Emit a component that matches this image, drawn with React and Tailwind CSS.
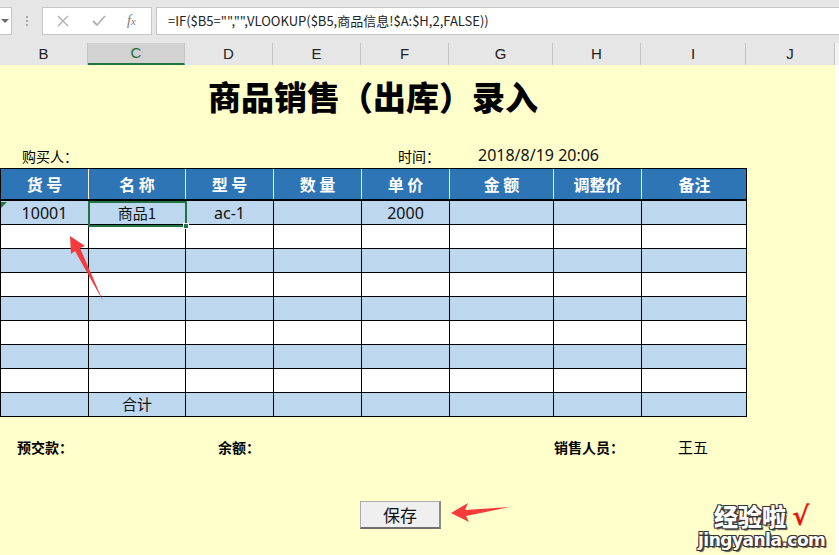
import React from 'react'

const gridCols = 'grid grid-cols-[88px_97px_88px_88px_88px_104px_88px_105px]'

const headers = ['货 号', '名 称', '型 号', '数 量', '单 价', '金 额', '调整价', '备注']

const rows = [
  ['10001', '商品1', 'ac-1', '', '2000', '', '', ''],
  ['', '', '', '', '', '', '', ''],
  ['', '', '', '', '', '', '', ''],
  ['', '', '', '', '', '', '', ''],
  ['', '', '', '', '', '', '', ''],
  ['', '', '', '', '', '', '', ''],
  ['', '', '', '', '', '', '', ''],
  ['', '', '', '', '', '', '', ''],
  ['', '合计', '', '', '', '', '', ''],
]

const letters = [
  ['B', 88], ['C', 97], ['D', 88], ['E', 88], ['F', 88], ['G', 104], ['H', 88], ['I', 105], ['J', 89],
]

const cjk = "font-['Noto_Sans_CJK_SC','Noto_Sans',sans-serif]"

function Toolbar() {
  return (
    <div className="h-[43px] bg-[#e6e6e6] flex items-start pt-[7px] relative">
      {/* name box tail */}
      <div className="w-[12px] h-[28px] bg-white border border-[#c6c6c6] border-l-0 flex items-center justify-end pr-[2px]">
        <div className="w-0 h-0 border-l-[4px] border-r-[4px] border-t-[4px] border-l-transparent border-r-transparent border-t-[#6b6b6b]" />
      </div>
      <div className="w-[30px] h-[28px] flex flex-col items-center justify-center gap-[2px]">
        <div className="w-[2px] h-[2px] bg-[#a8a8a8]" />
        <div className="w-[2px] h-[2px] bg-[#a8a8a8]" />
        <div className="w-[2px] h-[2px] bg-[#a8a8a8]" />
      </div>
      <div className="w-[110px] h-[28px] bg-white border border-[#c6c6c6] flex items-center text-[#a6a6a6]">
        <svg width="14" height="14" viewBox="0 0 14 14" className="ml-[13px]">
          <path d="M2 2 L12 12 M12 2 L2 12" stroke="#b0b0b0" strokeWidth="1.4" fill="none" />
        </svg>
        <svg width="16" height="14" viewBox="0 0 16 14" className="ml-[21px]">
          <path d="M2 7 L6 11 L14 2" stroke="#b0b0b0" strokeWidth="1.8" fill="none" />
        </svg>
        <span className="ml-[20px] font-['Liberation_Serif',serif] italic text-[14px] text-[#7a7a7a] leading-none">
          f<span className="text-[11px]">x</span>
        </span>
      </div>
      <div className="ml-[4px] flex-1 h-[28px] bg-white border border-[#c6c6c6] border-r-0 flex items-center pl-[11px]">
        <span className={`${cjk} text-[13px] text-[#222]`}>
          =IF($B5="","",VLOOKUP($B5,商品信息!$A:$H,2,FALSE))
        </span>
      </div>
    </div>
  )
}

function ColumnHeaders() {
  return (
    <div className="h-[22px] bg-[#e6e6e6] flex">
      {letters.map(([l, w]) => (
        <div
          key={l}
          style={{ width: w }}
          className={`h-full flex items-center justify-center border-r border-[#c4c4c4] font-['Liberation_Sans',sans-serif] text-[15px] ${
            l === 'C'
              ? 'bg-[#d2d2d2] text-[#1e6b40] border-b-2 border-b-[#217346]'
              : 'text-[#222]'
          }`}
        >
          {l}
        </div>
      ))}
      <div className="flex-1 bg-[#f3f3f3]" />
    </div>
  )
}

function DataTable() {
  return (
    <div className="w-[747px] border-t border-l border-r border-black relative">
      <div className={`${gridCols} h-[32px] bg-[#2e75b6] border-b-2 border-black`}>
        {headers.map((h, i) => (
          <div
            key={i}
            className={`flex items-center justify-center text-white font-bold text-[16px] ${cjk} ${
              i < headers.length - 1 ? 'border-r border-[#f5edc8]' : ''
            }`}
          >
            {h}
          </div>
        ))}
      </div>
      {rows.map((r, ri) => (
        <div
          key={ri}
          className={`${gridCols} h-[24px] border-b border-black ${ri % 2 === 0 ? 'bg-[#bdd7ee]' : 'bg-white'}`}
        >
          {r.map((c, ci) => (
            <div
              key={ci}
              className={`flex items-center justify-center text-[#111] ${
                ci < r.length - 1 ? 'border-r border-black' : ''
              } ${/[0-9a-z]/.test(c) && !/商品/.test(c) ? "font-['Noto_Sans',sans-serif] text-[16px]" : `${cjk} text-[15px]`}`}
            >
              {c}
            </div>
          ))}
        </div>
      ))}
      {/* error indicator */}
      <div className="absolute left-0 top-[33px] w-0 h-0 border-t-[6px] border-r-[6px] border-t-[#1e7b3c] border-r-transparent" />
      {/* selected cell */}
      <div className="absolute left-[87px] top-[32px] w-[99px] h-[26px] border-2 border-[#217346]" />
      <div className="absolute left-[182px] top-[54px] w-[6px] h-[6px] bg-[#217346] border border-white" />
    </div>
  )
}

export default function App() {
  return (
    <div className="w-[839px] h-[555px] overflow-hidden bg-[#ffffcc] relative">
      <Toolbar />
      <ColumnHeaders />

      <div className="w-[746px] h-[63px] flex items-center justify-center">
        <h1 className={`${cjk} font-black text-[33px] text-black leading-none`}>商品销售（出库）录入</h1>
      </div>

      <div className={`${gridCols} h-[40px] items-end pb-[1px]`}>
        <div className={`${cjk} text-[14px] pl-[22px] whitespace-nowrap`}>购买人：</div>
        <div />
        <div />
        <div />
        <div className={`${cjk} text-[14px] pl-[37px] whitespace-nowrap`}>时间：</div>
        <div className="font-['Noto_Sans',sans-serif] text-[16px] pl-[29px] whitespace-nowrap text-[#111]">
          2018/8/19 20:06
        </div>
      </div>

      <DataTable />

      <div className={`${cjk} mt-[20px] pl-[17px] flex text-[14px] font-bold h-[20px] items-center`}>
        <div className="w-[201px]">预交款：</div>
        <div className="w-[336px]">余额：</div>
        <div className="w-[124px]">销售人员：</div>
        <div className="font-normal text-[15px]">王五</div>
      </div>

      <div className="mt-[44px] ml-[360px]">
        <button
          className={`${cjk} w-[81px] h-[28px] bg-[#efefef] border border-[#adadad] border-b-2 border-r-2 border-b-[#6f6f6f] border-r-[#8a8a8a] text-[17px] text-[#111] flex items-center justify-center`}
        >
          保存
        </button>
      </div>

      {/* red annotation arrows */}
      <svg className="absolute left-0 top-0 pointer-events-none" width="839" height="555">
        <polygon points="70,236 85,246 80,248 103,301 75,251 71,254" fill="#f43a3a" />
        <polygon points="451,513 468,503 465,510 510,507 466,516 469,522" fill="#f43a3a" />
      </svg>

      {/* watermark */}
      <div className="absolute left-[698px] top-[503px] flex flex-col items-center">
        <div className="flex items-center">
          <span
            className={`${cjk} font-black text-[24px] leading-none text-white [text-shadow:1px_1px_0_#333,-1px_-1px_0_#333,1px_-1px_0_#333,-1px_1px_0_#333,2px_2px_1px_#555]`}
          >
            经验啦
          </span>
          <span className="ml-[6px] text-[26px] leading-none font-bold text-[#f01010] font-['DejaVu_Sans',sans-serif]">√</span>
        </div>
        <span
          className="mt-[3px] font-['DejaVu_Sans',sans-serif] font-bold text-[17px] leading-none tracking-[-0.5px] text-white [text-shadow:1px_1px_0_#333,-1px_-1px_0_#333,1px_-1px_0_#333,-1px_1px_0_#333,2px_2px_1px_#555]"
        >
          jingyanla.com
        </span>
      </div>

      <div className="absolute right-0 top-[65px] w-[4px] h-[490px] bg-white" />
    </div>
  )
}
